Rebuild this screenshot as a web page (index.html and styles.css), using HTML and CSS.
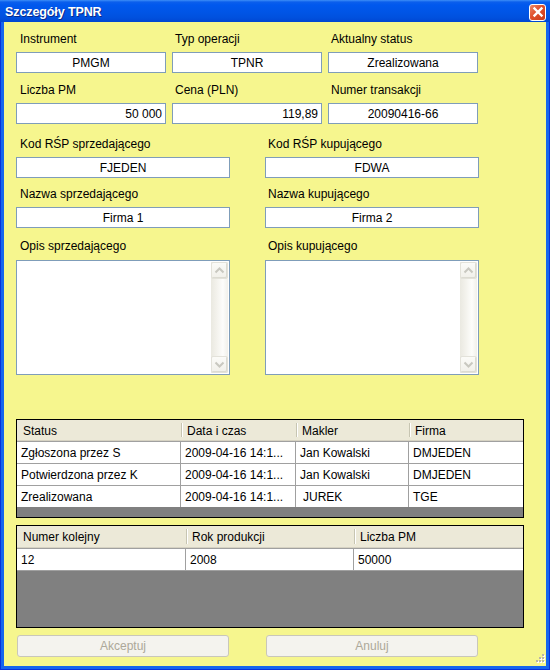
FILE: index.html
```html
<!DOCTYPE html>
<html lang="pl">
<head>
<meta charset="utf-8">
<title>Szczegóły TPNR</title>
<link rel="stylesheet" href="styles.css">
</head>
<body>
<div class="window">
  <div class="titlebar">
    <span class="title">Szczegóły TPNR</span>
    <span class="close"><svg width="14" height="14" viewBox="0 0 14 14"><path d="M3.5 3.5 L10.5 10.5 M10.5 3.5 L3.5 10.5" stroke="#fff" stroke-width="2.4" stroke-linecap="square"/></svg></span>
  </div>
  <div class="frame">
    <div class="client">
      <div class="row3">
        <div class="field"><div class="lbl first">Instrument</div><div class="inp center">PMGM</div></div>
        <div class="field"><div class="lbl">Typ operacji</div><div class="inp center">TPNR</div></div>
        <div class="field"><div class="lbl">Aktualny status</div><div class="inp center">Zrealizowana</div></div>
      </div>
      <div class="row3 r2">
        <div class="field"><div class="lbl first">Liczba PM</div><div class="inp right">50 000</div></div>
        <div class="field"><div class="lbl">Cena (PLN)</div><div class="inp right">119,89</div></div>
        <div class="field"><div class="lbl">Numer transakcji</div><div class="inp center">20090416-66</div></div>
      </div>
      <div class="row2 r3">
        <div class="field"><div class="lbl first">Kod RŚP sprzedającego</div><div class="inp center">FJEDEN</div></div>
        <div class="field"><div class="lbl">Kod RŚP kupującego</div><div class="inp center">FDWA</div></div>
      </div>
      <div class="row2 r4">
        <div class="field"><div class="lbl first">Nazwa sprzedającego</div><div class="inp center">Firma 1</div></div>
        <div class="field"><div class="lbl">Nazwa kupującego</div><div class="inp center">Firma 2</div></div>
      </div>
      <div class="row2 r5">
        <div class="field tall"><div class="lbl first">Opis sprzedającego</div>
          <div class="memo"><div class="memo-text"></div>
            <div class="vscroll">
              <div class="sbtn"><svg width="15" height="15" viewBox="0 0 15 15"><path d="M3.5 9.5 L7.5 5.5 L11.5 9.5" fill="none" stroke="#c9c8c0" stroke-width="2"/></svg></div>
              <div class="strack"></div>
              <div class="sbtn"><svg width="15" height="15" viewBox="0 0 15 15"><path d="M3.5 5.5 L7.5 9.5 L11.5 5.5" fill="none" stroke="#c9c8c0" stroke-width="2"/></svg></div>
            </div>
          </div>
        </div>
        <div class="field tall"><div class="lbl">Opis kupującego</div>
          <div class="memo"><div class="memo-text"></div>
            <div class="vscroll">
              <div class="sbtn"><svg width="15" height="15" viewBox="0 0 15 15"><path d="M3.5 9.5 L7.5 5.5 L11.5 9.5" fill="none" stroke="#c9c8c0" stroke-width="2"/></svg></div>
              <div class="strack"></div>
              <div class="sbtn"><svg width="15" height="15" viewBox="0 0 15 15"><path d="M3.5 5.5 L7.5 9.5 L11.5 5.5" fill="none" stroke="#c9c8c0" stroke-width="2"/></svg></div>
            </div>
          </div>
        </div>
      </div>

      <div class="grid g1">
        <div class="grow ghead c4">
          <div class="hc">Status</div><div class="hc">Data i czas</div><div class="hc">Makler</div><div class="hc">Firma</div>
        </div>
        <div class="grow c4">
          <div class="cell">Zgłoszona przez S</div><div class="cell">2009-04-16 14:1...</div><div class="cell">Jan Kowalski</div><div class="cell">DMJEDEN</div>
        </div>
        <div class="grow c4">
          <div class="cell">Potwierdzona przez K</div><div class="cell">2009-04-16 14:1...</div><div class="cell">Jan Kowalski</div><div class="cell">DMJEDEN</div>
        </div>
        <div class="grow c4">
          <div class="cell">Zrealizowana</div><div class="cell">2009-04-16 14:1...</div><div class="cell indent">JUREK</div><div class="cell">TGE</div>
        </div>
      </div>

      <div class="grid g2">
        <div class="grow ghead c3">
          <div class="hc">Numer kolejny</div><div class="hc">Rok produkcji</div><div class="hc">Liczba PM</div>
        </div>
        <div class="grow c3 tallrow">
          <div class="cell">12</div><div class="cell">2008</div><div class="cell">50000</div>
        </div>
      </div>

      <div class="buttons">
        <div class="btn">Akceptuj</div>
        <div class="btn">Anuluj</div>
      </div>

      <svg class="grip" width="12" height="12" viewBox="0 0 12 12">
        <g fill="#fff"><rect x="10" y="2" width="2" height="2"/><rect x="7" y="5" width="2" height="2"/><rect x="10" y="5" width="2" height="2"/><rect x="4" y="8" width="2" height="2"/><rect x="7" y="8" width="2" height="2"/><rect x="10" y="8" width="2" height="2"/></g>
        <g fill="#b8b6a8"><rect x="9" y="1" width="2" height="2"/><rect x="6" y="4" width="2" height="2"/><rect x="9" y="4" width="2" height="2"/><rect x="3" y="7" width="2" height="2"/><rect x="6" y="7" width="2" height="2"/><rect x="9" y="7" width="2" height="2"/></g>
      </svg>
    </div>
  </div>
</div>
</body>
</html>
```

FILE: styles.css
```css
html, body {
  margin: 0;
  padding: 0;
  background: #ffffff;
}

body {
  font-family: "Liberation Sans", Arial, sans-serif;
  font-size: 12px;
  color: #000;
}

.window {
  width: 550px;
  height: 670px;
  display: flex;
  flex-direction: column;
}

.titlebar {
  height: 22px;
  flex: 0 0 22px;
  background: linear-gradient(#3d8ef7 0, #0b5fec 2px, #0058ee 5px, #0055e6 12px, #0050dd 18px, #0046d2 22px);
  display: flex;
  align-items: center;
  justify-content: space-between;
  padding: 0 4px 0 5px;
  box-sizing: border-box;
}

.title {
  color: #fff;
  font-weight: bold;
  font-size: 12.5px;
  letter-spacing: -0.1px;
  text-shadow: 1px 1px 0 #0a2a8a;
  padding-top: 1px;
}

.close {
  width: 17px;
  height: 17px;
  box-sizing: border-box;
  border: 1px solid #fff;
  border-radius: 3px;
  background: linear-gradient(135deg, #ec8a6a 0, #e0502c 45%, #c83a18 100%);
  display: flex;
  align-items: center;
  justify-content: center;
  margin-top: 2px;
}

.close svg {
  display: block;
}

.frame {
  flex: 1;
  background: #0831d9;
  padding: 0 1px 1px 1px;
  display: flex;
}

.client {
  position: relative;
  flex: 1;
  border: 3px solid #1665ee;
  border-top: 0;
  background: #f6f68e;
  padding: 10px 0 0 12px;
  box-sizing: border-box;
}

.row3 {
  display: grid;
  grid-template-columns: repeat(3, 150px);
  column-gap: 6px;
}

.row2 {
  display: grid;
  grid-template-columns: 214px 214px;
  column-gap: 35px;
}

.r2 { margin-top: 10px; }
.r3 { margin-top: 13px; }
.r4 { margin-top: 9px; }
.r5 { margin-top: 11px; }

.field {
  display: flex;
  flex-direction: column;
  gap: 6px;
}

.field.tall {
  gap: 7px;
}

.lbl {
  height: 14px;
  line-height: 14px;
  padding-left: 3px;
  white-space: nowrap;
}

.lbl.first {
  padding-left: 4px;
}

.inp {
  height: 21px;
  box-sizing: border-box;
  border: 1px solid #7f9db9;
  background: #fff;
  line-height: 20px;
  padding: 0 3px;
  white-space: nowrap;
}

.center { text-align: center; }
.right { text-align: right; }

.memo {
  height: 115px;
  box-sizing: border-box;
  border: 1px solid #7f9db9;
  background: #fff;
  display: flex;
  padding: 1px;
}

.memo-text {
  flex: 1;
}

.vscroll {
  width: 17px;
  display: flex;
  flex-direction: column;
  background: linear-gradient(to right, #eae9e1 0, #f2f1eb 30%, #fdfdfb 70%, #f1f0ea 100%);
}

.sbtn {
  height: 17px;
  box-sizing: border-box;
  border: 1px solid #e3e2da;
  border-radius: 2px;
  background: linear-gradient(#fbfbf8, #f1f0ea);
  display: flex;
  align-items: center;
  justify-content: center;
  box-shadow: inset -1px -1px 0 #dcdbd2;
}

.sbtn svg {
  display: block;
}

.strack {
  flex: 1;
}

.grid {
  width: 508px;
  box-sizing: border-box;
  border: 1px solid #000;
  background: #808080;
  display: flex;
  flex-direction: column;
}

.g1 {
  margin-top: 44px;
  height: 99px;
}

.g2 {
  margin-top: 7px;
  height: 103px;
}

.grow {
  display: grid;
  background: #fff;
}

.c4 {
  grid-template-columns: 164px 115px 113px 114px;
  height: 22px;
}

.c3 {
  grid-template-columns: 169px 168px 169px;
  height: 22px;
}

.tallrow {
  height: 23px;
}

.ghead {
  background: #ece9d8;
  height: 21px;
  box-shadow: inset 0 -1px 0 #d6d2c2;
}

.g2 .ghead {
  height: 22px;
}

.hc {
  position: relative;
  padding-left: 6px;
  line-height: 22px;
  white-space: nowrap;
  overflow: hidden;
}

.hc + .hc::before {
  content: "";
  position: absolute;
  left: 0;
  top: 3px;
  bottom: 4px;
  width: 1px;
  background: #c7c5b2;
  box-shadow: 1px 0 0 #fff;
}

.cell {
  box-sizing: border-box;
  border-top: 1px solid #a0a0a0;
  border-right: 1px solid #a0a0a0;
  padding-left: 4px;
  line-height: 22px;
  white-space: nowrap;
  overflow: hidden;
}

.cell:last-child {
  border-right: 0;
}

.tallrow .cell {
  line-height: 22px;
  border-bottom: 1px solid #a0a0a0;
}

.cell.indent {
  padding-left: 7px;
}

.buttons {
  margin-top: 7px;
  padding-left: 1px;
  display: flex;
  gap: 37px;
}

.btn {
  width: 212px;
  height: 22px;
  box-sizing: border-box;
  border: 1px solid #c9c7ba;
  border-radius: 3px;
  background: #f4f3ee;
  color: #aca899;
  text-align: center;
  line-height: 21px;
}

.grip {
  position: absolute;
  right: 1px;
  bottom: 1px;
  display: block;
}
```
